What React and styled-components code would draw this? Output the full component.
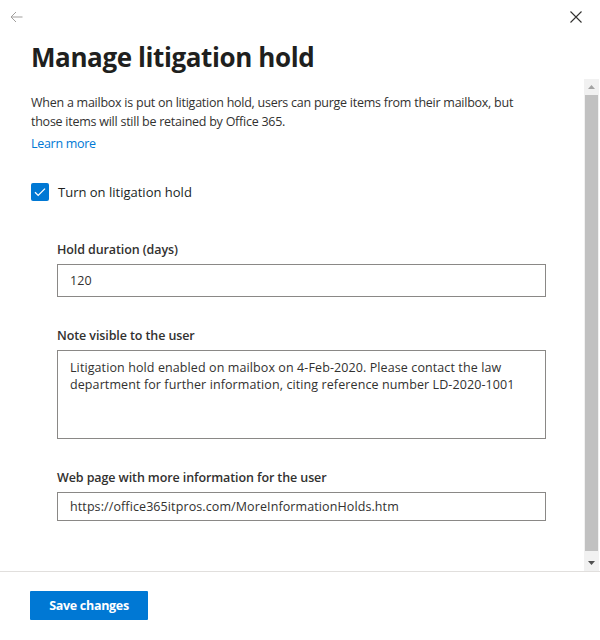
import React from "react";
import styled, { createGlobalStyle } from "styled-components";

const GlobalStyle = createGlobalStyle`
  html, body {
    margin: 0;
    padding: 0;
    background: #fff;
  }
  body {
    font-family: "Open Sans", "Noto Sans", sans-serif;
    color: #323130;
  }
`;

const Panel = styled.div`
  width: 600px;
  height: 640px;
  display: flex;
  flex-direction: column;
  background: #fff;
`;

const Header = styled.div`
  height: 34px;
  display: flex;
  align-items: center;
  justify-content: space-between;
  padding: 0 16px 0 8px;
`;

const IconButton = styled.button`
  width: 16px;
  height: 16px;
  padding: 0;
  border: none;
  background: none;
  display: flex;
  align-items: center;
  justify-content: center;
  color: ${(props) => props.color || "#323130"};
  cursor: pointer;
`;

const Title = styled.h1`
  margin: 5px 0 0 31px;
  font-size: 26px;
  line-height: 36px;
  font-weight: 700;
  letter-spacing: -0.4px;
  color: #201f1e;
`;

const Body = styled.div`
  flex: 1;
  display: flex;
  margin-top: 4px;
  min-height: 0;
`;

const Content = styled.div`
  flex: 1;
  padding: 14px 38px 0 31px;
  font-size: 12.5px;
  letter-spacing: 0.1px;
`;

const Description = styled.p`
  margin: 0;
  max-width: 500px;
  letter-spacing: -0.25px;
  line-height: 19px;
  color: #323130;
`;

const Link = styled.a`
  display: inline-block;
  margin-top: 3px;
  letter-spacing: -0.3px;
  line-height: 19px;
  color: #0078d4;
  text-decoration: none;
`;

const CheckRow = styled.label`
  display: flex;
  align-items: center;
  gap: 9px;
  margin-top: 29px;
  font-size: 13px;
  letter-spacing: 0;
  line-height: 20px;
  color: #201f1e;
`;

const CheckBox = styled.span`
  width: 18px;
  height: 18px;
  border-radius: 2px;
  background: #0078d4;
  display: flex;
  align-items: center;
  justify-content: center;
`;

const Fields = styled.div`
  margin-top: 38px;
  padding-left: 26px;
  display: flex;
  flex-direction: column;
  gap: 29px;
`;

const Field = styled.div`
  display: flex;
  flex-direction: column;
  gap: 4px;
`;

const Label = styled.div`
  line-height: 20px;
  font-weight: 600;
  letter-spacing: -0.1px;
  color: #323130;
`;

const Input = styled.div`
  box-sizing: border-box;
  height: ${(props) => props.h || 33}px;
  border: 1px solid #8a8886;
  display: flex;
  align-items: center;
  padding: 0 12px;
  color: #323130;
`;

const TextArea = styled.div`
  box-sizing: border-box;
  height: 89px;
  border: 1px solid #8a8886;
  padding: 8px 12px;
  line-height: 17px;
  color: #323130;
`;

const ScrollTrack = styled.div`
  width: 15px;
  margin-right: 1px;
  background: #f1f1f1;
  display: flex;
  flex-direction: column;
  align-items: center;
`;

const ScrollArrow = styled.div`
  height: 16px;
  width: 100%;
  display: flex;
  align-items: center;
  justify-content: center;
`;

const Thumb = styled.div`
  flex: 1;
  width: 13px;
  margin: 0 0 4px;
  background: #c1c1c1;
`;

const Footer = styled.div`
  border-top: 1px solid #e1dfdd;
  height: 69px;
  padding: 19px 0 0 30px;
  box-sizing: border-box;
`;

const PrimaryButton = styled.button`
  height: 29px;
  width: 118px;
  border: none;
  border-radius: 1px;
  background: #0078d4;
  color: #fff;
  font-family: "Open Sans", sans-serif;
  font-size: 12.5px;
  letter-spacing: -0.3px;
  font-weight: 700;
  cursor: pointer;
`;

const Triangle = ({ up }) => (
  <svg width="7" height="4" viewBox="0 0 7 4">
    <path d={up ? "M3.5 0 L7 4 L0 4 Z" : "M0 0 L7 0 L3.5 4 Z"} fill={up ? "#a3a3a3" : "#505050"} />
  </svg>
);

export default function App() {
  return (
    <Panel>
      <GlobalStyle />
      <Header>
        <IconButton color="#a19f9d" aria-label="Back">
          <svg width="13" height="12" viewBox="0 0 13 12" fill="none" stroke="currentColor" strokeWidth="1">
            <path d="M12.5 6 H1 M6 1 L1 6 L6 11" />
          </svg>
        </IconButton>
        <IconButton color="#323130" aria-label="Close">
          <svg width="12" height="12" viewBox="0 0 12 12" fill="none" stroke="currentColor" strokeWidth="1.1">
            <path d="M0.5 0.5 L11.5 11.5 M11.5 0.5 L0.5 11.5" />
          </svg>
        </IconButton>
      </Header>
      <Title>Manage litigation hold</Title>
      <Body>
        <Content>
          <Description>
            When a mailbox is put on litigation hold, users can purge items from their mailbox, but
            those items will still be retained by Office 365.
          </Description>
          <Link href="#">Learn more</Link>
          <CheckRow>
            <CheckBox>
              <svg width="12" height="10" viewBox="0 0 12 10" fill="none" stroke="#fff" strokeWidth="1.3">
                <path d="M1 5.2 L4.2 8.4 L11 1.6" />
              </svg>
            </CheckBox>
            Turn on litigation hold
          </CheckRow>
          <Fields>
            <Field>
              <Label>Hold duration (days)</Label>
              <Input h={33}>120</Input>
            </Field>
            <Field>
              <Label>Note visible to the user</Label>
              <TextArea>
                Litigation hold enabled on mailbox on 4-Feb-2020. Please contact the law department for
                further information, citing reference number LD-2020-1001
              </TextArea>
            </Field>
            <Field>
              <Label>Web page with more information for the user</Label>
              <Input h={29}>https://office365itpros.com/MoreInformationHolds.htm</Input>
            </Field>
          </Fields>
        </Content>
        <ScrollTrack>
          <ScrollArrow>
            <Triangle up />
          </ScrollArrow>
          <Thumb />
          <ScrollArrow>
            <Triangle />
          </ScrollArrow>
        </ScrollTrack>
      </Body>
      <Footer>
        <PrimaryButton>Save changes</PrimaryButton>
      </Footer>
    </Panel>
  );
}
